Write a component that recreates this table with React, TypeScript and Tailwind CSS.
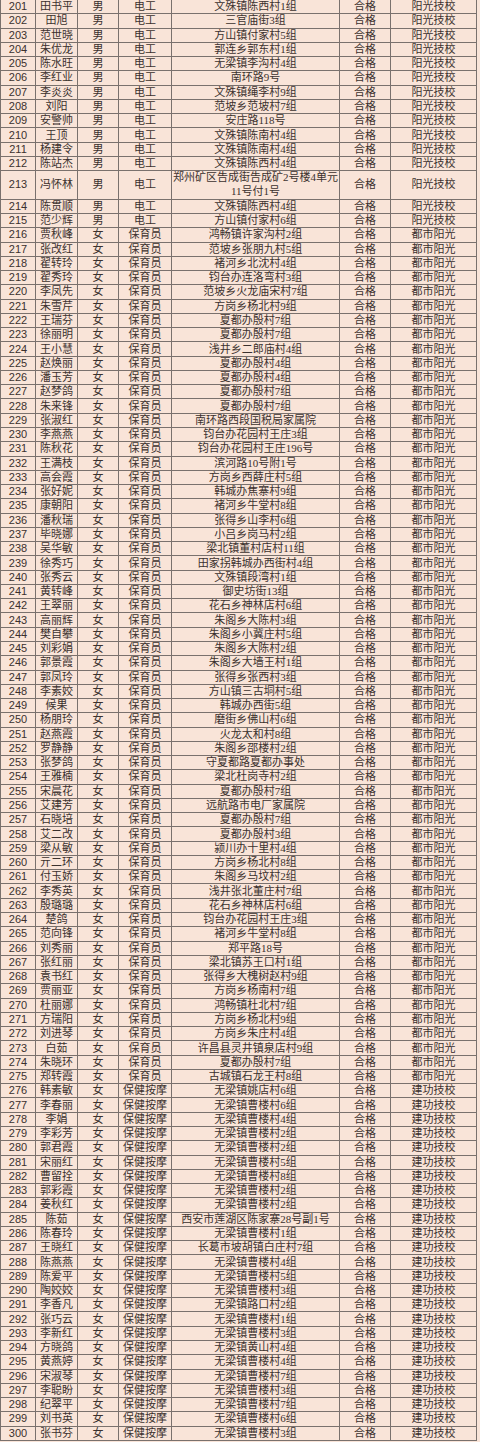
import React from 'react';

type Row = [number, string, string];

const ROWS: Row[] = [
  [201, '田书平', '文殊镇陈西村1组'],
  [202, '田旭', '三官庙街3组'],
  [203, '范世晓', '方山镇付家村5组'],
  [204, '朱优龙', '郭连乡郭东村1组'],
  [205, '陈水旺', '无梁镇李沟村4组'],
  [206, '李红业', '南环路9号'],
  [207, '李炎炎', '文殊镇绳李村9组'],
  [208, '刘阳', '范坡乡范坡村7组'],
  [209, '安警帅', '安庄路118号'],
  [210, '王顶', '文殊镇陈南村4组'],
  [211, '杨建令', '文殊镇陈南村4组'],
  [212, '陈站杰', '文殊镇陈西村4组'],
  [213, '冯怀林', '郑州矿区告成街告成矿2号楼4单元|11号付1号'],
  [214, '陈贯顺', '文殊镇陈西村4组'],
  [215, '范少辉', '方山镇付家村6组'],
  [216, '贾秋峰', '鸿畅镇许家沟村2组'],
  [217, '张改红', '范坡乡张朋九村5组'],
  [218, '翟转玲', '褚河乡北沈村4组'],
  [219, '翟秀玲', '钧台办连洛弯村3组'],
  [220, '李凤先', '范坡乡火龙庙宋村7组'],
  [221, '朱雪芹', '方岗乡杨北村9组'],
  [222, '王瑞芬', '夏都办殷村7组'],
  [223, '徐丽明', '夏都办殷村7组'],
  [224, '王小慧', '浅井乡二郎庙村4组'],
  [225, '赵焕丽', '夏都办殷村4组'],
  [226, '潘玉芳', '夏都办殷村4组'],
  [227, '赵梦鸽', '夏都办殷村7组'],
  [228, '朱来锋', '夏都办殷村7组'],
  [229, '张淑红', '南环路西段国税局家属院'],
  [230, '李燕燕', '钧台办花园村王庄3组'],
  [231, '陈秋花', '钧台办花园村王庄196号'],
  [232, '王满枝', '滨河路10号附1号'],
  [233, '高会霞', '方岗乡西薛庄村5组'],
  [234, '张好妮', '韩城办焦寨村9组'],
  [235, '康朝阳', '褚河乡牛堂村8组'],
  [236, '潘秋瑞', '张得乡山李村6组'],
  [237, '毕晓娜', '小吕乡岗马村2组'],
  [238, '吴华敏', '梁北镇董村店村11组'],
  [239, '徐秀巧', '田家拐韩城办西街村4组'],
  [240, '张秀云', '文殊镇段湾村1组'],
  [241, '黄转峰', '御史坊街13组'],
  [242, '王翠丽', '花石乡神林店村6组'],
  [243, '高丽辉', '朱阁乡大陈村3组'],
  [244, '樊自攀', '朱阁乡小冀庄村5组'],
  [245, '刘彩娟', '朱阁乡大陈村2组'],
  [246, '郭景霞', '朱阁乡大墙王村1组'],
  [247, '郭凤玲', '张得乡张西村3组'],
  [248, '李素姣', '方山镇三古垌村5组'],
  [249, '候果', '韩城办西街5组'],
  [250, '杨朋玲', '磨街乡佛山村6组'],
  [251, '赵燕霞', '火龙太和村8组'],
  [252, '罗静静', '朱阁乡邵楼村2组'],
  [253, '张梦鸽', '守夏都路夏都办事处'],
  [254, '王雅楠', '梁北杜岗寺村2组'],
  [255, '宋晨花', '夏都办殷村7组'],
  [256, '艾建芳', '远航路市电厂家属院'],
  [257, '石晓培', '夏都办殷村7组'],
  [258, '艾二改', '夏都办殷村3组'],
  [259, '梁从敏', '颍川办十里村4组'],
  [260, '亓二环', '方岗乡杨北村8组'],
  [261, '付玉娇', '朱阁乡马坟村2组'],
  [262, '李秀英', '浅井张北董庄村7组'],
  [263, '殷璐璐', '花石乡神林店村6组'],
  [264, '楚鸽', '钧台办花园村王庄3组'],
  [265, '范向锋', '褚河乡牛堂村8组'],
  [266, '刘秀丽', '郑平路18号'],
  [267, '张红丽', '梁北镇苏王口村1组'],
  [268, '袁书红', '张得乡大槐树赵村9组'],
  [269, '贾丽亚', '方岗乡杨南村7组'],
  [270, '杜丽娜', '鸿畅镇杜北村7组'],
  [271, '方瑞阳', '方岗乡杨北村9组'],
  [272, '刘进琴', '方岗乡朱庄村4组'],
  [273, '白茹', '许昌县灵井镇泉店村9组'],
  [274, '朱晓环', '夏都办殷村7组'],
  [275, '郑转霞', '古城镇石龙王村8组'],
  [276, '韩素敏', '无梁镇姚店村6组'],
  [277, '李春丽', '无梁镇曹楼村6组'],
  [278, '李娟', '无梁镇曹楼村4组'],
  [279, '李彩芳', '无梁镇曹楼村2组'],
  [280, '郭君霞', '无梁镇曹楼村2组'],
  [281, '宋丽红', '无梁镇曹楼村5组'],
  [282, '曹留拴', '无梁镇曹楼村8组'],
  [283, '郭彩霞', '无梁镇曹楼村2组'],
  [284, '姜秋红', '无梁镇曹楼村2组'],
  [285, '陈茹', '西安市莲湖区陈家寨28号副1号'],
  [286, '陈春玲', '无梁镇曹楼村1组'],
  [287, '王晓红', '长葛市坡胡镇白庄村7组'],
  [288, '陈燕燕', '无梁镇曹楼村4组'],
  [289, '陈爱平', '无梁镇曹楼村5组'],
  [290, '陶姣姣', '无梁镇曹楼村3组'],
  [291, '李香凡', '无梁镇路口村2组'],
  [292, '张巧云', '无梁镇曹楼村1组'],
  [293, '李新红', '无梁镇曹楼村3组'],
  [294, '方晓鸽', '无梁镇黄山村4组'],
  [295, '黄燕婷', '无梁镇曹楼村4组'],
  [296, '宋淑琴', '无梁镇曹楼村7组'],
  [297, '李聪盼', '无梁镇曹楼村3组'],
  [298, '纪翠平', '无梁镇曹楼村7组'],
  [299, '刘书英', '无梁镇曹楼村6组'],
  [300, '张书芬', '无梁镇曹楼村3组'],
];

// 工种 / 学校 follow the number ranges
const groupOf = (no: number) => {
  if (no <= 215) return { sex: '男', job: '电工', school: '阳光技校' };
  if (no <= 275) return { sex: '女', job: '保育员', school: '都市阳光' };
  return { sex: '女', job: '保健按摩', school: '建功技校' };
};

const cell = 'flex items-center justify-center border-r border-[#7a716d] whitespace-nowrap overflow-hidden';

export default function App() {
  return (
    <div
      className="w-[480px] h-[1442px] bg-[#f9e4d8] text-[#3b312e] text-[11px] leading-none overflow-hidden"
      style={{ fontFamily: '"Liberation Serif", "Noto Sans CJK SC", serif' }}
    >
      <div className="w-[477px] border-l border-[#7a716d] flex flex-col">
        {ROWS.map(([no, name, addr]) => {
          const g = groupOf(no);
          const lines = addr.split('|');
          const tall = lines.length > 1;
          return (
            <div
              key={no}
              className={`grid grid-cols-[35px_42px_41px_53px_168px_51px_86px] border-b border-[#7a716d] ${
                tall ? 'h-[28.55px]' : 'h-[14.27px]'
              }`}
            >
              <div className={cell} style={{ fontFamily: '"Liberation Sans", sans-serif' }}>{no}</div>
              <div className={cell}>{name}</div>
              <div className={cell}>{g.sex}</div>
              <div className={cell}>{g.job}</div>
              <div className={`${cell} flex-col gap-[3px]`}>
                {lines.map(l => (
                  <span key={l}>{l}</span>
                ))}
              </div>
              <div className={cell}>合格</div>
              <div className={cell}>{g.school}</div>
            </div>
          );
        })}
      </div>
    </div>
  );
}
